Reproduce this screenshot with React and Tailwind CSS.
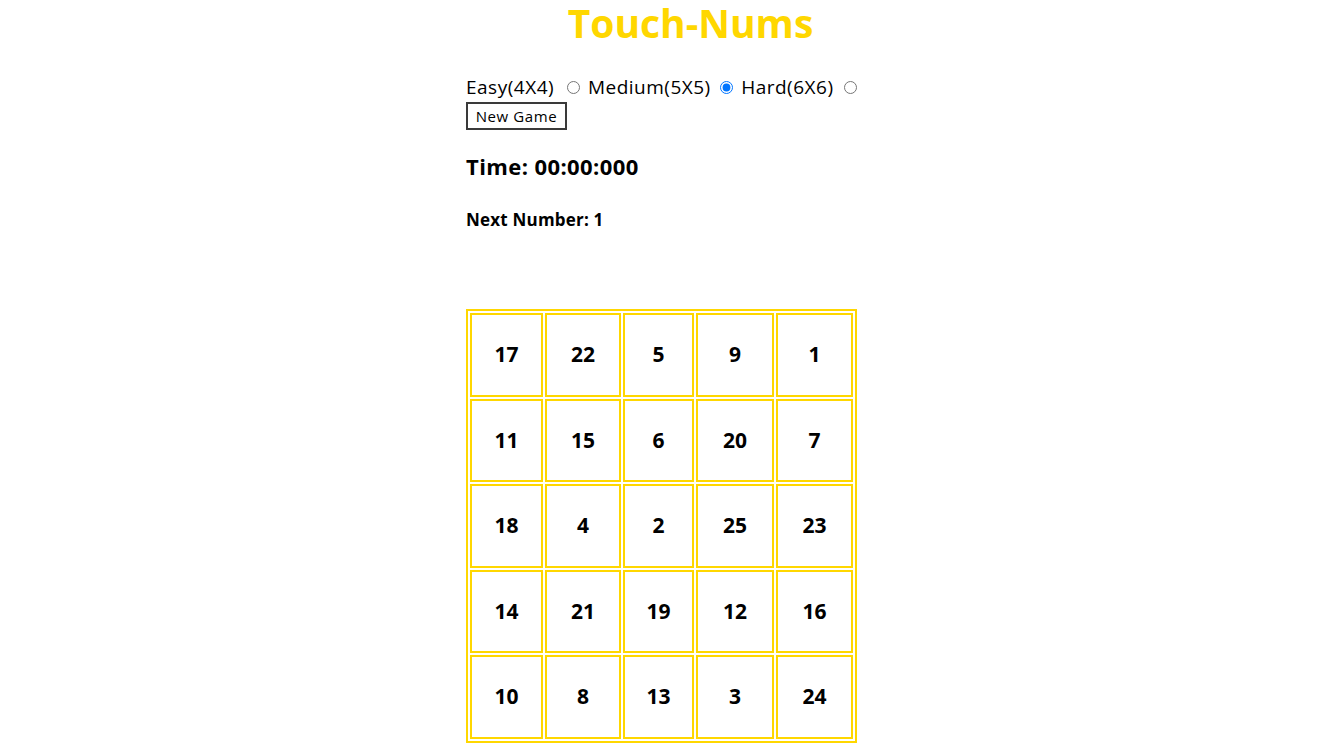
import React from 'react';

const rows = [
  [17, 22, 5, 9, 1],
  [11, 15, 6, 20, 7],
  [18, 4, 2, 25, 23],
  [14, 21, 19, 12, 16],
  [10, 8, 13, 3, 24],
];

const font = { fontFamily: '"Open Sans", "Liberation Sans", sans-serif' };

export default function App() {
  return (
    <div className="min-h-screen bg-white text-black" style={font}>
      <div className="mx-auto w-[391px]">
        {/* title sits a bit right of the board's centre in the original */}
        <h1 className="-mt-[4px] pl-[58px] text-center text-[39px] font-bold leading-[54px] text-[#ffd700]">
          Touch-Nums
        </h1>

        <div className="mt-[24px] flex h-[27px] items-center whitespace-nowrap text-[19px] tracking-[0.5px]">
          <span className="w-[103px]">Easy(4X4)</span>
          <input type="radio" name="level" className="m-0 h-[13px] w-[13px]" />
          <span className="ml-[8px] w-[135px]">Medium(5X5)</span>
          <input type="radio" name="level" defaultChecked className="m-0 h-[13px] w-[13px]" />
          <span className="ml-[8px] w-[105px]">Hard(6X6)</span>
          <input type="radio" name="level" className="m-0 h-[13px] w-[13px]" />
        </div>

        <button className="mt-[1px] flex h-[28px] w-[101px] items-center justify-center border-2 border-[#3a3a3a] bg-white text-[15px] tracking-[0.6px]">
          New Game
        </button>

        <h2 className="mt-[21px] text-[22px] font-bold leading-[30px] tracking-[0.4px]">Time: 00:00:000</h2>
        <h3 className="mt-[26px] text-[17px] font-bold leading-[26px] tracking-[0.2px]">Next Number: 1</h3>

        <div className="mt-[76px] grid grid-cols-[73px_76px_71px_78px_77px] auto-rows-[83.5px] gap-[2px] border-2 border-[#ffd700] p-[2px]">
          {rows.flat().map((n) => (
            <div
              key={n}
              className="flex items-center justify-center border-2 border-[#ffd700] text-[21px] font-bold"
            >
              {n}
            </div>
          ))}
        </div>
      </div>
    </div>
  );
}
